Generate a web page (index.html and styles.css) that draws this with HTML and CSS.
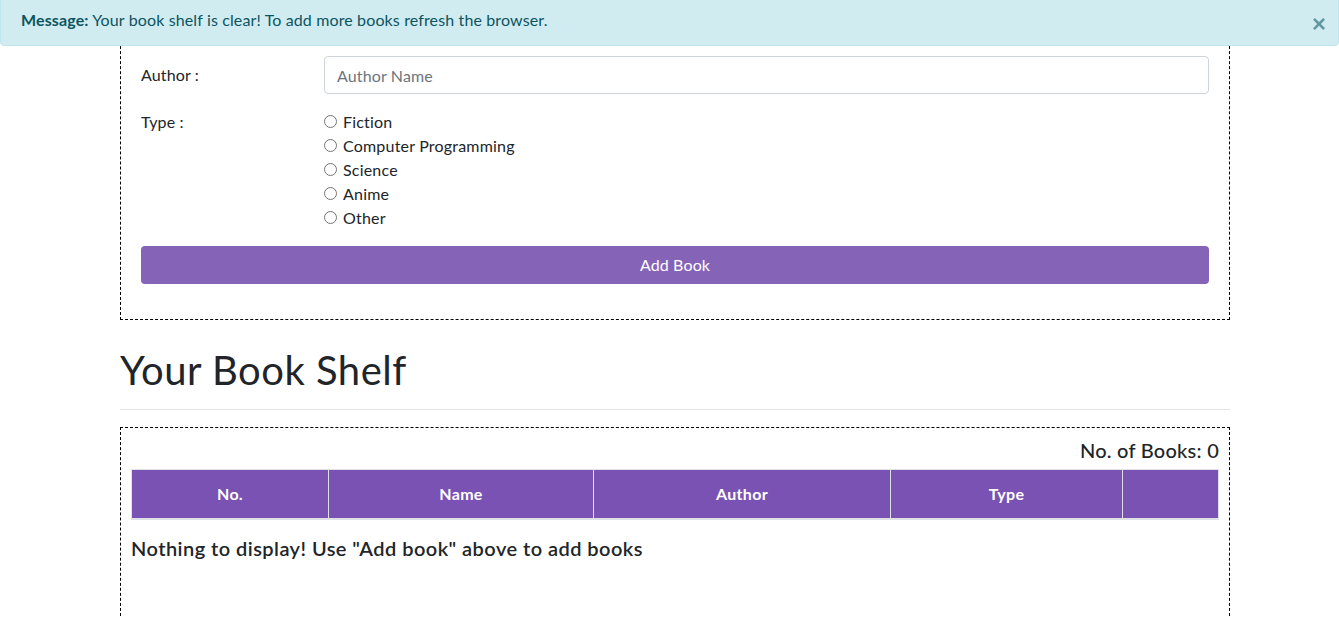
FILE: index.html
```html
<!DOCTYPE html>
<html lang="en">
<head>
<meta charset="utf-8">
<title>Book Shelf</title>
<link rel="stylesheet" href="styles.css">
</head>
<body>
<div class="alert">
  <strong>Message:</strong> Your book shelf is clear! To add more books refresh the browser.
  <button class="close" type="button">&times;</button>
</div>

<div class="container">
  <form class="form-box">
    <div class="form-row">
      <label class="col-label" for="author">Author :</label>
      <div class="col-field">
        <input id="author" class="form-control" type="text" placeholder="Author Name">
      </div>
    </div>
    <div class="form-row type-row">
      <div class="col-label type-label">Type :</div>
      <div class="col-field">
        <div class="form-check"><input type="radio" name="type" id="t1"><label for="t1">Fiction</label></div>
        <div class="form-check"><input type="radio" name="type" id="t2"><label for="t2">Computer Programming</label></div>
        <div class="form-check"><input type="radio" name="type" id="t3"><label for="t3">Science</label></div>
        <div class="form-check"><input type="radio" name="type" id="t4"><label for="t4">Anime</label></div>
        <div class="form-check"><input type="radio" name="type" id="t5"><label for="t5">Other</label></div>
      </div>
    </div>
    <button type="button" class="btn-add">Add Book</button>
  </form>

  <h1 class="title">Your Book Shelf</h1>
  <hr class="divider">

  <div class="shelf-box">
    <h5 class="count">No. of Books: 0</h5>
    <table class="table">
      <thead>
        <tr>
          <th class="c1">No.</th>
          <th class="c2">Name</th>
          <th class="c3">Author</th>
          <th class="c4">Type</th>
          <th class="c5"></th>
        </tr>
      </thead>
    </table>
    <h5 class="empty">Nothing to display! Use "Add book" above to add books</h5>
  </div>
</div>
</body>
</html>
```

FILE: styles.css
```css
* { box-sizing: border-box; }

body {
  margin: 0;
  font-family: Lato, "Noto Sans", "Liberation Sans", sans-serif;
  font-size: 16px;
  line-height: 24px;
  letter-spacing: 0.13px;
  color: #212529;
  background: #fff;
}

.alert {
  position: fixed;
  top: -5px;
  left: 0;
  right: 0;
  z-index: 10;
  height: 51px;
  padding: 12px 64px 12px 20px;
  background: #d1ecf1;
  border: 1px solid #bee5eb;
  border-radius: 4px;
  color: #0c5460;
}

.alert strong { font-weight: 700; }

.close {
  position: absolute;
  top: 0;
  right: 0;
  padding: 16px 12px 12px;
  border: 0;
  background: transparent;
  font-family: "Liberation Sans", Arial, sans-serif;
  font-size: 24px;
  font-weight: 700;
  line-height: 1;
  color: #0c5460;
  opacity: .55;
}

.container {
  width: 1110px;
  margin-left: 120px;
}

.form-box {
  margin: 16px 0 0;
  border: 1px dashed #000;
  padding: 39px 20px 35px;
}

.form-row {
  display: flex;
  margin: 0 -15px 16px;
}

.col-label {
  flex: 0 0 183px;
  padding: 7px 15px;
}

.type-label { padding-top: 0; padding-bottom: 0; }

.col-field {
  flex: 1 1 auto;
  padding: 0 15px;
}

.form-control {
  display: block;
  width: 100%;
  height: 38px;
  padding: 6px 12px;
  font-family: inherit;
  font-size: 16px;
  line-height: 24px;
  letter-spacing: inherit;
  color: #495057;
  background: #fff;
  border: 1px solid #ced4da;
  border-radius: 4px;
}

.form-control::placeholder { color: #6c757d; }

.form-check {
  position: relative;
  padding-left: 19px;
  height: 24px;
  letter-spacing: 0.2px;
}

.form-check input {
  position: absolute;
  left: 0;
  top: 5px;
  margin: 0;
  width: 13px;
  height: 13px;
}

.btn-add {
  display: block;
  width: 100%;
  height: 38px;
  padding: 6px 12px;
  border: 0;
  border-radius: 4px;
  background: #8563b7;
  color: #fff;
  font-family: inherit;
  font-size: 16px;
  line-height: 24px;
  letter-spacing: inherit;
}

.title {
  margin: 26px 0 0;
  font-size: 40px;
  font-weight: 400;
  line-height: 48px;
  letter-spacing: 0.5px;
}

.divider {
  margin: 15px 0 17px;
  border: 0;
  border-top: 1px solid rgba(0,0,0,.1);
}

.shelf-box {
  border: 1px dashed #000;
  padding: 10px 10px 60px;
}

.count {
  margin: 0 0 7px;
  text-align: right;
  font-size: 20px;
  font-weight: 500;
  line-height: 24px;
  letter-spacing: 0.25px;
}

.table {
  width: 100%;
  border-collapse: collapse;
  margin-bottom: 16px;
}

.table th {
  padding: 12px;
  background: #7952b3;
  color: #fff;
  font-weight: 700;
  text-align: center;
  border: 1px solid #dee2e6;
  border-bottom-width: 2px;
  line-height: 24px;
  letter-spacing: 0.3px;
}

.c1 { width: 197px; }
.c2 { width: 265px; }
.c3 { width: 297px; }
.c4 { width: 232px; }
.c5 { width: 96px; }

.empty {
  margin: 0;
  font-size: 20px;
  font-weight: 600;
  line-height: 24px;
  letter-spacing: 0.45px;
}
```
